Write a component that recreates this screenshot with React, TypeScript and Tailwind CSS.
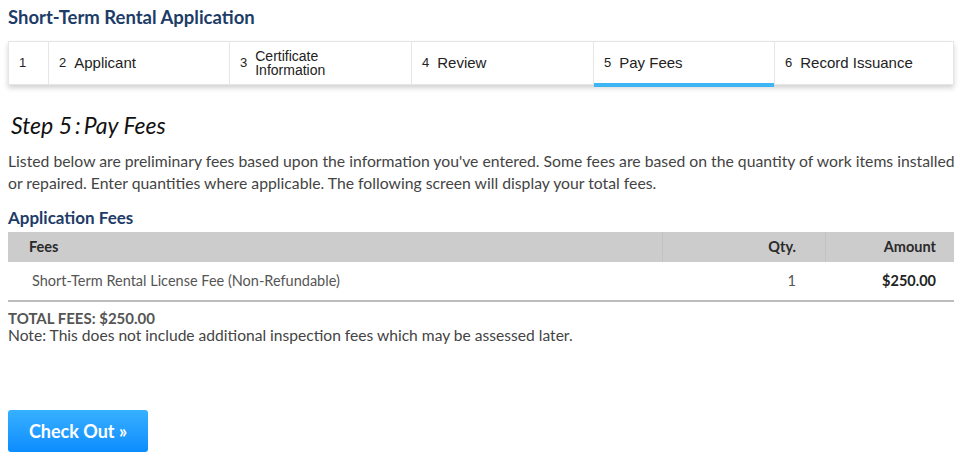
import React from "react"

const steps = [
  { n: "1", label: "", w: "w-[39px]" },
  { n: "2", label: "Applicant", w: "w-[181px]" },
  { n: "3", label: "Certificate\nInformation", w: "w-[182px]" },
  { n: "4", label: "Review", w: "w-[182px]" },
  { n: "5", label: "Pay Fees", w: "w-[181px]", active: true },
  { n: "6", label: "Record Issuance", w: "flex-1" },
]

function StepBar() {
  return (
    <div className="ml-[8px] mr-[6px] mt-[14px] flex h-[44px] border border-[#e6e6e6] bg-white shadow-[0_3px_5px_rgba(0,0,0,0.18)] font-['Liberation_Sans',Arial,sans-serif]">
      {steps.map((s, i) => (
        <div
          key={s.n}
          className={`relative flex items-center ${s.w} ${i > 0 ? "border-l border-[#e6e6e6]" : ""} pl-[10px]`}
        >
          <span className="mr-[8px] text-[13px] text-[#222]">{s.n}</span>
          {s.label && (
            <span
              className={`whitespace-pre-line text-[#222] ${s.label.includes("\n") ? "text-[14px] leading-[14px]" : "text-[15px]"}`}
            >
              {s.label}
            </span>
          )}
          {s.active && <div className="absolute -bottom-[3px] left-0 right-0 h-[4px] bg-[#3eb6f4]" />}
        </div>
      ))}
    </div>
  )
}

export default function App() {
  return (
    <div className="h-[461px] w-[960px] bg-white font-['Lato',sans-serif] text-[#444]">
      <div className="pt-[7px]">
        <h1 className="pl-[8px] text-[18.5px] font-bold leading-[20px] text-[#1d3c68]">Short-Term Rental Application</h1>
      </div>

      <StepBar />

      <h2 className="mt-[27px] pl-[11px] text-[23px] italic leading-[27px] text-[#111]">
        Step 5<span className="mx-[3px]">:</span>Pay Fees
      </h2>

      <p className="mt-[11px] whitespace-nowrap pl-[8px] text-[15.75px] leading-[22px] text-[#444]">
        Listed below are preliminary fees based upon the information you've entered. Some fees are based on the quantity of work items installed
        <br />
        or repaired. Enter quantities where applicable. The following screen will display your total fees.
      </p>

      <h3 className="mt-[14px] pl-[8px] text-[17px] font-bold leading-[20px] text-[#1d3c68]">Application Fees</h3>

      <div className="ml-[8px] mr-[6px] mt-[4px] text-[14.5px]">
        <div className="flex h-[30px] items-center bg-[#cccccc] font-bold text-[#2a2a2a]">
          <div className="flex-1 pl-[21px]">Fees</div>
          <div className="flex h-full w-[163px] items-center justify-end border-l border-[#c3c3c3] pr-[29px]">Qty.</div>
          <div className="flex h-full w-[129px] items-center justify-end border-l border-[#c3c3c3] pr-[18px]">Amount</div>
        </div>
        <div className="flex h-[40px] items-center border-b-2 border-[#bdbdbd] text-[#555]">
          <div className="flex-1 pl-[24px]">Short-Term Rental License Fee (Non-Refundable)</div>
          <div className="w-[163px] pr-[29px] text-right">1</div>
          <div className="w-[129px] pr-[18px] text-right font-bold text-[#222]">$250.00</div>
        </div>
      </div>

      <div className="mt-[8px] pl-[8px] leading-[17px]">
        <div className="text-[15px] font-bold text-[#555]">TOTAL FEES: $250.00</div>
        <div className="text-[15.6px] text-[#444]">Note: This does not include additional inspection fees which may be assessed later.</div>
      </div>

      <div className="mt-[66px] pl-[8px]">
        <button className="h-[42px] w-[140px] rounded-[3px] bg-gradient-to-b from-[#36b0ff] to-[#0b8cff] text-[18px] font-bold text-white">
          Check Out »
        </button>
      </div>
    </div>
  )
}
